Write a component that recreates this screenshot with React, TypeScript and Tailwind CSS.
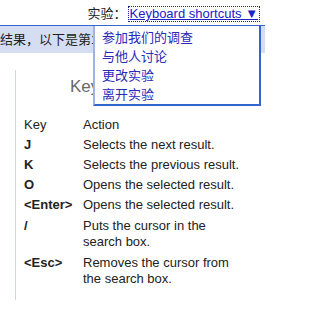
import React from "react";

const font = { fontFamily: '"Liberation Sans", Arial, "Noto Sans CJK SC", sans-serif' };

const rows: [string, string[]][] = [
  ["J", ["Selects the next result."]],
  ["K", ["Selects the previous result."]],
  ["O", ["Opens the selected result."]],
  ["<Enter>", ["Opens the selected result."]],
  ["/", ["Puts the cursor in the", "search box."]],
  ["<Esc>", ["Removes the cursor from", "the search box."]],
];

const menu = ["参加我们的调查", "与他人讨论", "更改实验", "离开实验"];

export default function App() {
  return (
    <div className="relative h-[318px] w-[265px] overflow-hidden bg-white text-[13px] text-[#222]" style={font}>
      <div className="flex h-[25px] items-center justify-end pr-[5px] pt-[3px]">
        <span className="text-[#222]">实验：</span>
        <span className="ml-[1px] border border-dotted border-[#1a1aa8] px-[1px] leading-[14px] text-[#2020c8] underline">
          Keyboard shortcuts <span className="no-underline">▼</span>
        </span>
      </div>
      <div className="flex h-[28px] items-center overflow-hidden whitespace-nowrap border-t border-[#3366cc] bg-[#d5ddf3]">
        结果，以下是第1-10项，共约
      </div>
      <div className="ml-[15px] mt-[17px] h-[230px] border-l border-[#c9d7f1] pl-[8px]">
        <div className="ml-[46px] pt-[7px] text-[17px] leading-[20px] text-[#676767]">Keyboard shortcuts</div>
        <div className="mt-[20px] grid grid-cols-[59px_1fr] gap-y-[4px] leading-[16px]">
          <div>Key</div>
          <div>Action</div>
          {rows.map(([k, lines]) => (
            <React.Fragment key={k}>
              <div className={lines.length > 1 ? "pt-[1px] font-bold" : "font-bold"}>{k}</div>
              <div className={lines.length > 1 ? "pt-[1px]" : ""}>
                {lines.map((l) => (
                  <div key={l}>{l}</div>
                ))}
              </div>
            </React.Fragment>
          ))}
        </div>
      </div>
      <div className="absolute left-[93px] top-[26px] h-[80px] w-[168px] border-x-2 border-b-2 border-[#3366cc] border-l-[#9fb3e0] bg-white pl-[7px] pt-[2px]">
        {menu.map((m) => (
          <div key={m} className="h-[19px] leading-[19px] text-[#2a2ab8]">
            {m}
          </div>
        ))}
      </div>
    </div>
  );
}
